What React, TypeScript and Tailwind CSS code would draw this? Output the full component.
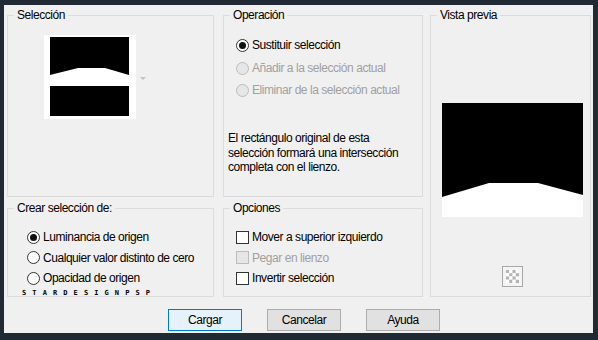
import React from "react";

const font = "font-['Liberation_Sans','Noto_Sans',sans-serif]";

function Radio({ checked, disabled, label }: { checked?: boolean; disabled?: boolean; label: string }) {
  return (
    <div className="flex items-center h-[22px]">
      <span
        className={
          "w-[13px] h-[13px] rounded-full border flex items-center justify-center " +
          (disabled ? "border-[#bcbcbc] bg-[#e6e6e6]" : "border-[#333333] bg-white")
        }
      >
        {checked && <span className="w-[7px] h-[7px] rounded-full bg-[#111111]" />}
      </span>
      <span className={"ml-[3px] " + (disabled ? "text-[#a0a0a0]" : "text-black")}>{label}</span>
    </div>
  );
}

function Check({ disabled, label }: { disabled?: boolean; label: string }) {
  return (
    <div className="flex items-center h-[20.5px]">
      <span
        className={
          "w-[13px] h-[13px] border " +
          (disabled ? "border-[#bcbcbc] bg-[#e6e6e6]" : "border-[#333333] bg-white")
        }
      />
      <span className={"ml-[3px] " + (disabled ? "text-[#a0a0a0]" : "text-black")}>{label}</span>
    </div>
  );
}

function Group({ title, className, children }: { title: string; className: string; children?: React.ReactNode }) {
  return (
    <fieldset className={"border border-[#dcdcdc] min-w-0 " + className}>
      <legend className="ml-[6px] px-[3px] leading-[14px] text-black">{title}</legend>
      {children}
    </fieldset>
  );
}

export default function App() {
  return (
    <div className={"w-[598px] h-[340px] bg-[#212a34] pt-[5px] pl-[4px] pr-[5px] pb-[7px] text-[12px] tracking-[-0.45px] " + font}>
      <div className="h-[328px] bg-[#f0f0f0] flex flex-col">
        <div className="flex pl-[3px] pt-[3px]">
          <div className="flex flex-col w-[207px] gap-[4px]">
            <Group title="Selección" className="h-[189px]">
              <div className="flex items-center ml-[36px] mt-[13px]">
                <svg width="92" height="84" viewBox="0 0 92 84">
                  <rect x="0" y="0" width="92" height="84" fill="#ffffff" />
                  <rect x="6" y="2" width="79" height="79" fill="#000000" />
                  <polygon points="6,40 34,33 61,33 85,40 85,51 6,51" fill="#ffffff" />
                </svg>
                <svg width="8" height="6" viewBox="0 0 8 6" className="ml-[3px] mt-[1px]">
                  <polygon points="1,2 7,2 4,5" fill="#c4c4c4" />
                </svg>
              </div>
            </Group>
            <Group title="Crear selección de:" className="h-[96px]">
              <div className="flex flex-col ml-[19px] mt-[12px]">
                <div className="h-[20.5px] flex items-center"><Radio checked label="Luminancia de origen" /></div>
                <div className="h-[20.5px] flex items-center"><Radio label="Cualquier valor distinto de cero" /></div>
                <div className="h-[20.5px] flex items-center"><Radio label="Opacidad de origen" /></div>
              </div>
              <div className="ml-[14px] mt-[1px] text-[7px] leading-[7px] font-bold tracking-[6.1px] text-black font-['DejaVu_Sans_Mono',monospace]">
                STARDESIGNPSP
              </div>
            </Group>
          </div>
          <div className="flex flex-col w-[200px] ml-[9px] gap-[4px]">
            <Group title="Operación" className="h-[189px]">
              <div className="flex flex-col ml-[12px] mt-[12px]">
                <Radio checked label="Sustituir selección" />
                <div className="mt-[1px]"><Radio disabled label="Añadir a la selección actual" /></div>
                <Radio disabled label="Eliminar de la selección actual" />
              </div>
              <p className="ml-[4px] mt-[30px] leading-[14.5px] text-black">
                El rectángulo original de esta
                <br />
                selección formará una intersección
                <br />
                completa con el lienzo.
              </p>
            </Group>
            <Group title="Opciones" className="h-[96px]">
              <div className="flex flex-col ml-[12px] mt-[12px]">
                <Check label="Mover a superior izquierdo" />
                <Check disabled label="Pegar en lienzo" />
                <Check label="Invertir selección" />
              </div>
            </Group>
          </div>
          <div className="w-[161px] ml-[7px]">
            <Group title="Vista previa" className="h-[289px]">
              <div className="flex flex-col items-start">
                <svg width="141" height="114" viewBox="0 0 141 114" className="ml-[11px] mt-[81px]">
                  <rect x="0" y="0" width="141" height="114" fill="#000000" />
                  <polygon points="0,94 47,80 96,80 141,92 141,114 0,114" fill="#ffffff" />
                </svg>
                <svg width="21" height="21" viewBox="0 0 21 21" className="ml-[71px] mt-[49px]">
                  <rect x="0.5" y="0.5" width="20" height="20" fill="#f4f4f4" stroke="#a8a8a8" />
                  {[0, 1, 2, 3].map((r) =>
                    [0, 1, 2, 3].map((c) => (
                      <rect
                        key={r + "-" + c}
                        x={4 + c * 3.25}
                        y={4 + r * 3.25}
                        width="3.25"
                        height="3.25"
                        fill={(r + c) % 2 === 0 ? "#b4b4b4" : "#ffffff"}
                      />
                    ))
                  )}
                </svg>
              </div>
            </Group>
          </div>
        </div>
        <div className="flex pl-[164px] mt-[12px] gap-[25px]">
          <button className="w-[74px] h-[22px] border border-[#0078d7] bg-[#e5f1fb] text-black">Cargar</button>
          <button className="w-[74px] h-[22px] border border-[#adadad] bg-[#e1e1e1] text-black">Cancelar</button>
          <button className="w-[74px] h-[22px] border border-[#adadad] bg-[#e1e1e1] text-black">Ayuda</button>
        </div>
      </div>
    </div>
  );
}
